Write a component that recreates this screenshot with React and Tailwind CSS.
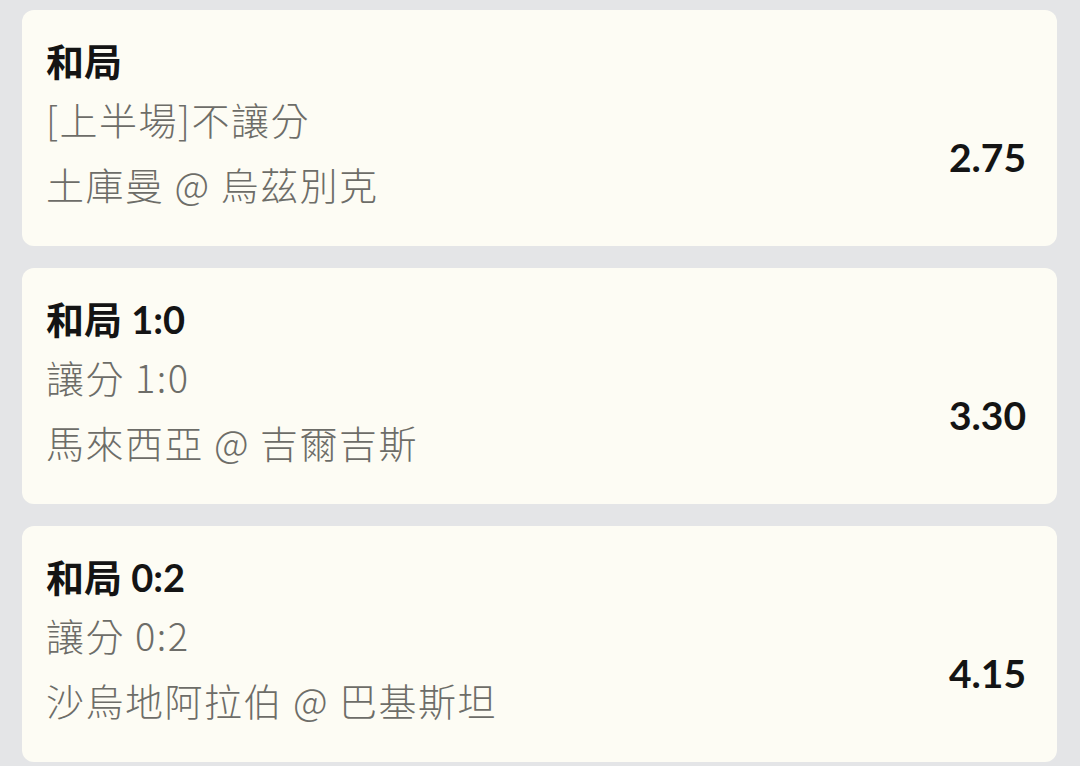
import React from "react";

const bets = [
  { title: "和局", market: "[上半場]不讓分", match: "土庫曼 @ 烏茲別克", odds: "2.75" },
  { title: "和局 1:0", market: "讓分 1:0", match: "馬來西亞 @ 吉爾吉斯", odds: "3.30" },
  { title: "和局 0:2", market: "讓分 0:2", match: "沙烏地阿拉伯 @ 巴基斯坦", odds: "4.15" },
];

function BetCard({ bet }) {
  return (
    <div className="flex h-[236px] rounded-xl bg-[#fdfcf4] pl-6 pr-[31px]">
      <div className="flex-1 pt-[22px]">
        <div className="h-[58px] leading-[58px] text-[38px] font-bold text-[#141414]">{bet.title}</div>
        <div className="h-[60px] leading-[58px] text-[38px] font-light tracking-[1.5px] text-[#6d6d68] font-['Noto_Sans_CJK_TC',sans-serif]">
          {bet.market}
        </div>
        <div className="mt-[5px] h-[60px] leading-[58px] text-[38px] font-light tracking-[1.5px] text-[#6d6d68] font-['Noto_Sans_CJK_TC',sans-serif]">
          {bet.match}
        </div>
      </div>
      <div className="flex items-center pt-[58px] text-[39px] font-bold text-[#141414]">{bet.odds}</div>
    </div>
  );
}

export default function App() {
  return (
    <div
      className="min-h-[766px] w-[1080px] bg-[#e4e5e7] pl-[22px] pr-[23px] pt-[10px] flex flex-col gap-[22px]"
      style={{ fontFamily: "Lato, 'Noto Sans CJK TC', sans-serif" }}
    >
      {bets.map((b) => (
        <BetCard key={b.title} bet={b} />
      ))}
    </div>
  );
}
